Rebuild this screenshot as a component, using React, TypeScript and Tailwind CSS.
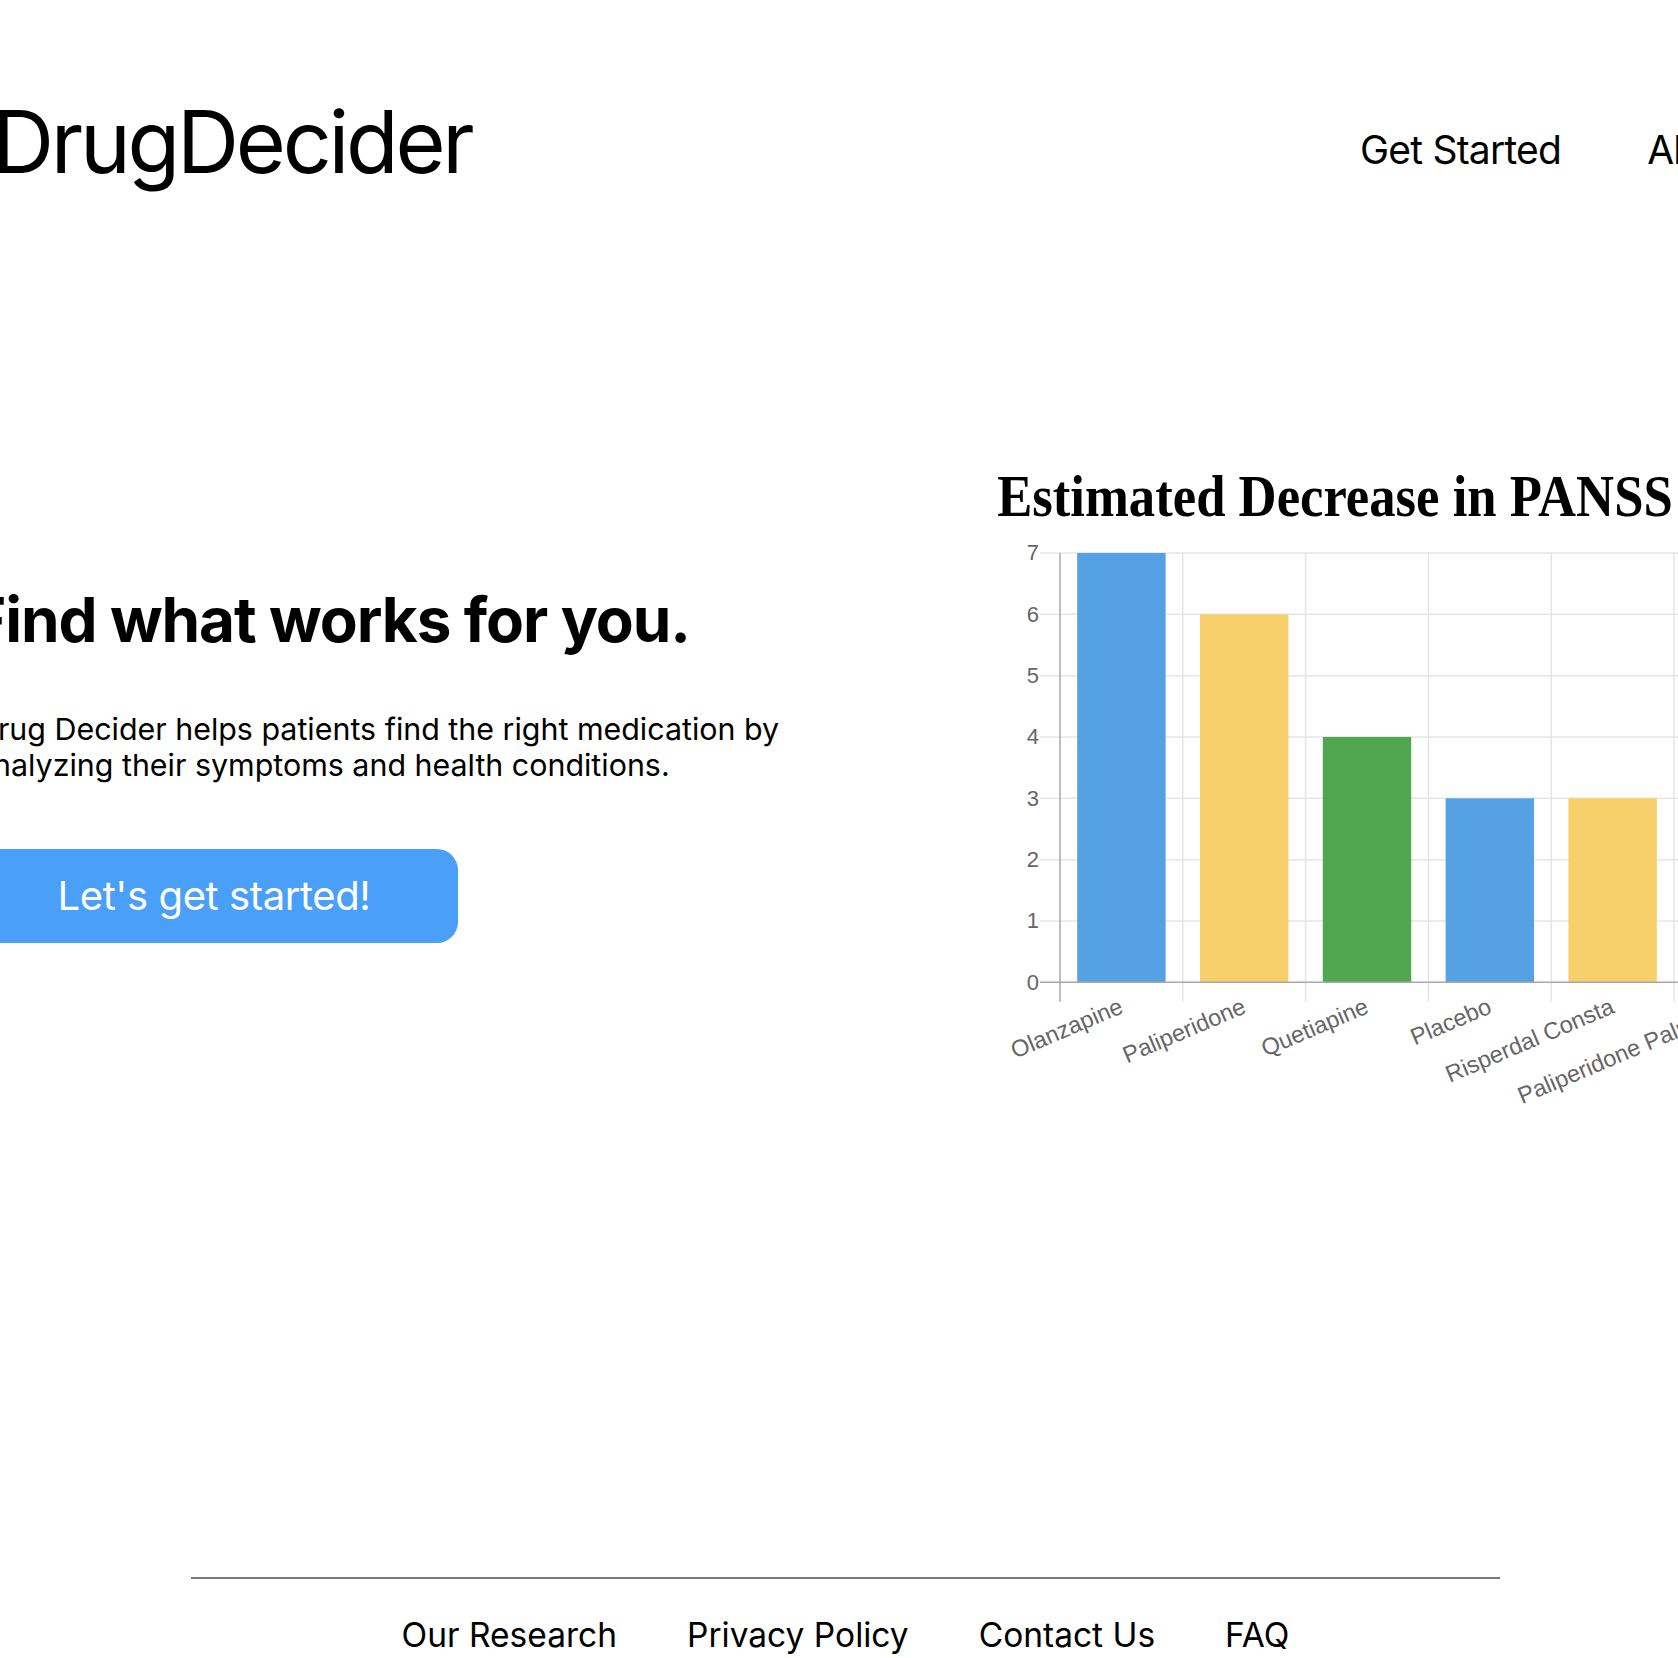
import React from 'react';

const bars = [
  { name: 'Olanzapine', value: 7, color: '#55a1e4' },
  { name: 'Paliperidone', value: 6, color: '#f7cf6b' },
  { name: 'Quetiapine', value: 4, color: '#50a750' },
  { name: 'Placebo', value: 3, color: '#55a1e4' },
  { name: 'Risperdal Consta', value: 3, color: '#f7cf6b' },
  { name: 'Paliperidone Palmitate', value: 3, color: '#50a750' },
];

// chart geometry (svg units)
const axisX = 70;
const zeroY = 443.3;
const unit = 61.33;
const cat = 122.8;
const tickBottom = 462.7;

const BarChart = () => {
  return (
    <svg width="780" height="600" className="block">
      {/* horizontal grid */}
      {[1, 2, 3, 4, 5, 6, 7].map((v) => (
        <line key={v} x1={50} x2={780} y1={zeroY - v * unit} y2={zeroY - v * unit} stroke="#e6e6e6" strokeWidth="1.5" />
      ))}
      {/* vertical grid + ticks */}
      {[1, 2, 3, 4, 5, 6].map((k) => (
        <line key={k} x1={axisX + k * cat} x2={axisX + k * cat} y1={zeroY - 7 * unit} y2={tickBottom} stroke="#e6e6e6" strokeWidth="1.5" />
      ))}
      {bars.map((b, i) => (
        <rect
          key={b.name}
          x={axisX + i * cat + 17.2}
          y={zeroY - b.value * unit}
          width={88.4}
          height={b.value * unit}
          fill={b.color}
        />
      ))}
      <line x1={50} x2={780} y1={zeroY} y2={zeroY} stroke="#a8a8a8" strokeWidth="1.5" />
      <line x1={axisX} x2={axisX} y1={zeroY - 7 * unit} y2={tickBottom} stroke="#a8a8a8" strokeWidth="1.5" />
      {[0, 1, 2, 3, 4, 5, 6, 7].map((v) => (
        <text
          key={v}
          x={49}
          y={zeroY - v * unit}
          textAnchor="end"
          dominantBaseline="central"
          fill="#666"
          fontSize="22"
          fontFamily="'Liberation Sans', Arial, sans-serif"
        >
          {v}
        </text>
      ))}
      {bars.map((b, i) => {
        const cx = axisX + (i + 0.5) * cat;
        return (
          <text
            key={b.name}
            x={cx}
            y={466}
            transform={`rotate(-23 ${cx} 466)`}
            textAnchor="end"
            dominantBaseline="central"
            fill="#666"
            fontSize="23.5"
            fontFamily="'Liberation Sans', Arial, sans-serif"
          >
            {b.name}
          </text>
        );
      })}
    </svg>
  );
};

export default function App() {
  return (
    <div className="flex min-h-[1658px] w-full flex-col overflow-hidden bg-white font-[Inter,sans-serif] text-black">
      <header className="grid grid-cols-[1360px_auto] items-start pt-[99px]">
        <h1 className="-ml-[8px] text-[86px] leading-none tracking-[-0.038em]">DrugDecider</h1>
        <nav className="mt-[31px] flex gap-[86px] whitespace-nowrap text-[39px] leading-none tracking-[-0.02em]">
          <a>Get Started</a>
          <a>About</a>
        </nav>
      </header>

      <section className="mt-[282px] flex">
        <div className="-ml-[30px] w-[1020px] shrink-0 pt-[122px]">
          <h2 className="text-[62px] font-bold leading-none tracking-[-0.018em]">Find what works for you.</h2>
          <p className="mt-[60px] whitespace-nowrap pl-[6px] text-[30.4px] leading-[36px]">
            Drug Decider helps patients find the right medication by
            <br />
            analyzing their symptoms and health conditions.
          </p>
          <button className="mt-[66px] flex h-[94px] w-[488px] items-center justify-center rounded-[21px] bg-[#4a9ff8] text-[40px] leading-none tracking-[-0.01em] text-white">
            Let's get started!
          </button>
        </div>
        <div className="shrink-0">
          <h2 className="origin-left scale-x-[0.893] whitespace-nowrap pl-[8px] font-['Liberation_Serif',serif] text-[59px] font-bold leading-none">
            Estimated Decrease in PANSS
          </h2>
          <div className="mt-[13px]">
            <BarChart />
          </div>
        </div>
      </section>

      <footer className="mt-auto flex flex-col items-center pb-[6px]">
        <div className="ml-[13px] h-[2px] w-[1309px] bg-[#7a7a7a]" />
        <div className="ml-[13px] mt-[40px] flex gap-[70px] text-[33.5px] leading-none">
          <a>Our Research</a>
          <a>Privacy Policy</a>
          <a>Contact Us</a>
          <a>FAQ</a>
        </div>
      </footer>
    </div>
  );
}
